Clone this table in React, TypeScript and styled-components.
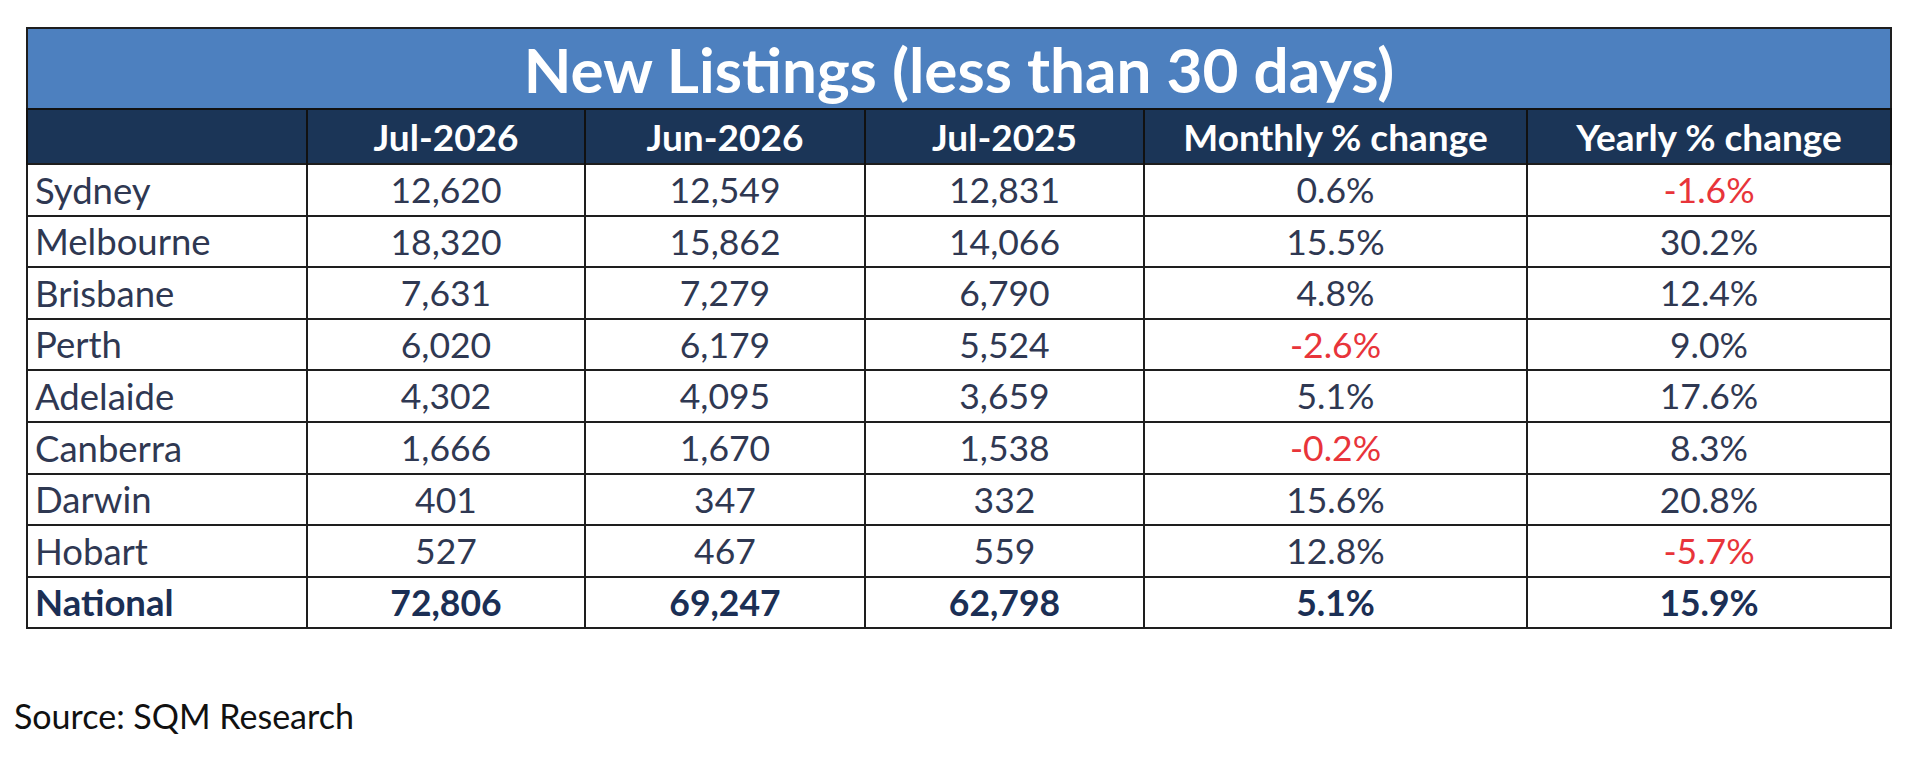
import React from "react";
import styled, { createGlobalStyle } from "styled-components";

const GlobalStyle = createGlobalStyle`
  html, body { margin: 0; padding: 0; background: #ffffff; }
  body { font-family: Lato, "Open Sans", "Liberation Sans", sans-serif; }
`;

const Page = styled.div`
  width: 1923px;
  height: 767px;
  box-sizing: border-box;
  padding: 27px 0 0 26px;
  display: flex;
  flex-direction: column;
`;

const Table = styled.table`
  width: 1864px;
  border-collapse: collapse;
  table-layout: fixed;
  border: 2px solid #1e1e1e;
`;

const TitleCell = styled.th`
  height: 79px;
  padding: 0;
  background: #4d80bf;
  color: #ffffff;
  font-family: Lato, "Liberation Sans", sans-serif;
  font-weight: 700;
  font-size: 62px;
  line-height: 1;
  text-align: center;
  vertical-align: middle;
  border: none;
`;

const HeadCell = styled.th`
  height: 53px;
  padding: 0;
  background: #1b3557;
  color: #ffffff;
  font-family: Lato, "Liberation Sans", sans-serif;
  font-weight: 700;
  font-size: 37px;
  line-height: 1;
  text-align: center;
  vertical-align: middle;
  border-left: 2px solid #111;
  border-right: 2px solid #111;
  border-top: 2px solid #111;
`;

const Cell = styled.td<{ $first?: boolean; $bold?: boolean; $neg?: boolean }>`
  height: 49.6px;
  padding: 0;
  padding-left: ${(p) => (p.$first ? "7px" : "0")};
  border: 2px solid #1e1e1e;
  font-family: Lato, "Liberation Sans", sans-serif;
  font-size: ${(p) => (p.$first ? "36.5px" : "35.5px")};
  line-height: 1;
  font-weight: ${(p) => (p.$bold ? 700 : 400)};
  color: ${(p) => (p.$neg ? "#e8343a" : p.$bold ? "#1b2f55" : "#2f3852")};
  text-align: ${(p) => (p.$first ? "left" : "center")};
  vertical-align: middle;
  white-space: nowrap;
`;

const Source = styled.div`
  margin-top: 70px;
  margin-left: -12px;
  font-family: Lato, "Liberation Sans", sans-serif;
  font-size: 34px;
  line-height: 1;
  color: #111111;
`;

type Row = { city: string; vals: string[]; bold?: boolean };

const rows: Row[] = [
  { city: "Sydney", vals: ["12,620", "12,549", "12,831", "0.6%", "-1.6%"] },
  { city: "Melbourne", vals: ["18,320", "15,862", "14,066", "15.5%", "30.2%"] },
  { city: "Brisbane", vals: ["7,631", "7,279", "6,790", "4.8%", "12.4%"] },
  { city: "Perth", vals: ["6,020", "6,179", "5,524", "-2.6%", "9.0%"] },
  { city: "Adelaide", vals: ["4,302", "4,095", "3,659", "5.1%", "17.6%"] },
  { city: "Canberra", vals: ["1,666", "1,670", "1,538", "-0.2%", "8.3%"] },
  { city: "Darwin", vals: ["401", "347", "332", "15.6%", "20.8%"] },
  { city: "Hobart", vals: ["527", "467", "559", "12.8%", "-5.7%"] },
  { city: "National", vals: ["72,806", "69,247", "62,798", "5.1%", "15.9%"], bold: true },
];

const headers = ["", "Jul-2026", "Jun-2026", "Jul-2025", "Monthly % change", "Yearly % change"];
const widths = [280, 278, 280, 279, 383, 364];

export default function App() {
  return (
    <>
      <GlobalStyle />
      <Page>
        <Table>
          <colgroup>
            {widths.map((w, i) => (
              <col key={i} style={{ width: w }} />
            ))}
          </colgroup>
          <thead>
            <tr>
              <TitleCell colSpan={6}>New Listings (less than 30 days)</TitleCell>
            </tr>
            <tr>
              {headers.map((h, i) => (
                <HeadCell key={i}>{h}</HeadCell>
              ))}
            </tr>
          </thead>
          <tbody>
            {rows.map((r) => (
              <tr key={r.city}>
                <Cell $first $bold={r.bold}>{r.city}</Cell>
                {r.vals.map((v, i) => (
                  <Cell key={i} $bold={r.bold} $neg={!r.bold && v.startsWith("-")}>
                    {v}
                  </Cell>
                ))}
              </tr>
            ))}
          </tbody>
        </Table>
        <Source>Source: SQM Research</Source>
      </Page>
    </>
  );
}
